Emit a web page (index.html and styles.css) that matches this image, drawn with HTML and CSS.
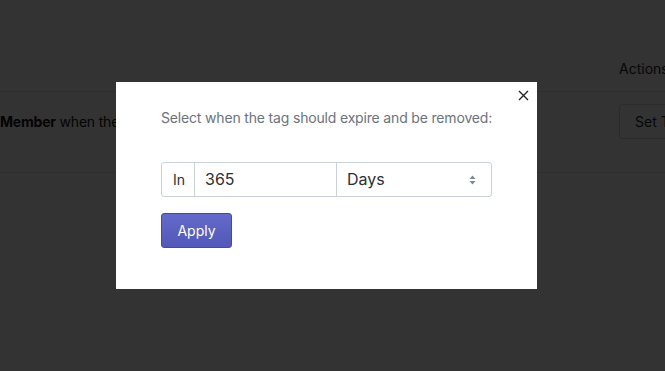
FILE: index.html
```html
<!DOCTYPE html>
<html>
	<head>
		<meta charset="UTF-8">
		<title>Set tag expiry</title>
		<link rel="stylesheet" href="styles.css">
	</head>
	<body>
		<div class="page">
			<div class="row head">
				<div class="cell first"></div>
				<div class="cell actions">Actions</div>
			</div>
			<div class="row">
				<div class="cell first"><b>Member</b> when the tag is applied to a person</div>
				<div class="cell actions"><span class="btn-set">Set Tag Expiry</span></div>
			</div>
		</div>

		<!-- modal over the page -->
		<div class="overlay">
			<div class="modal">
				<span class="close">
					<svg width="11" height="11" viewBox="0 0 11 11"><path d="M1 1L10 10M10 1L1 10" stroke="#222" stroke-width="1.4" fill="none"/></svg>
				</span>
				<p class="lead">Select when the tag should expire and be removed:</p>
				<div class="group">
					<span class="addon">In</span>
					<span class="num">365</span>
					<span class="unit">Days
						<svg class="arrows" width="7" height="10" viewBox="0 0 7 10"><path d="M3.5 0.5L6.5 4H0.5Z M3.5 9.5L6.5 6H0.5Z" fill="#7f8791"/></svg>
					</span>
				</div>
				<span class="apply">Apply</span>
			</div>
		</div>
	</body>
</html>
```

FILE: styles.css
```css
body {
	margin: 0;
	padding: 0;
	background: #fff;
	font-family: Inter, "Liberation Sans", sans-serif;
	color: #212529;
	overflow: hidden;
}

.page {
	width: 665px;
	height: 371px;
	overflow: hidden;
}

.row {
	display: flex;
	height: 68px;
	padding-top: 12px;
	border-bottom: 1px solid #dee2e6;
	align-items: flex-start;
	font-size: 14px;
	line-height: 35px;
}

.row.head {
	height: 91px;
	padding-top: 0;
	align-items: flex-end;
}

.head .cell {
	padding-bottom: 12px;
	line-height: 20px;
}

.first {
	width: 619px;
	flex-shrink: 0;
	white-space: nowrap;
	overflow: hidden;
	color: #111;
	letter-spacing: -0.2px;
}

.actions {
	white-space: nowrap;
}

.btn-set {
	display: inline-block;
	border: 1px solid #ced4da;
	border-radius: 3px;
	padding: 0 15px;
	line-height: 33px;
	font-size: 14px;
}

.overlay {
	position: fixed;
	left: 0;
	top: 0;
	right: 0;
	bottom: 0;
	background: rgba(0, 0, 0, 0.8);
	padding: 82px 0 0 116px;
}

.modal {
	position: relative;
	width: 331px;
	padding: 26px 45px 41px 45px;
	background: #fff;
}

.close {
	position: absolute;
	right: 8px;
	top: 8px;
	line-height: 0;
}

.lead {
	margin: 0 0 34px 0;
	font-size: 14px;
	line-height: 20px;
	letter-spacing: -0.17px;
	color: #6a7380;
	white-space: nowrap;
}

.group {
	display: flex;
	height: 33px;
	border: 1px solid #c9d1da;
	border-radius: 3px;
	font-size: 16px;
	line-height: 33px;
	color: #2b2f33;
}

.addon {
	width: 21px;
	padding-left: 11px;
	font-size: 14px;
	border-right: 1px solid #c9d1da;
}

.num {
	width: 131px;
	padding-left: 10px;
	border-right: 1px solid #c9d1da;
}

.unit {
	flex: 1;
	display: flex;
	align-items: center;
	justify-content: space-between;
	padding: 0 15px 0 10px;
}

.apply {
	display: inline-block;
	margin-top: 16px;
	width: 69px;
	height: 33px;
	line-height: 33px;
	text-align: center;
	font-size: 14px;
	color: #fff;
	background: linear-gradient(#636ac9, #5158b8);
	border: 1px solid #434aa6;
	border-radius: 3px;
}
```
